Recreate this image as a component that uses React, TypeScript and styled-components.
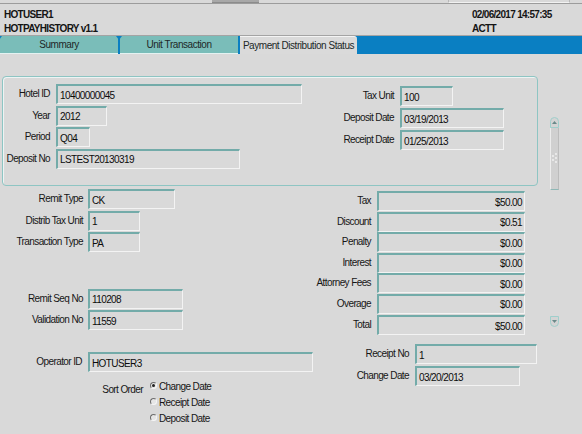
import React from 'react';
import styled, { createGlobalStyle } from 'styled-components';

const GlobalStyle = createGlobalStyle`
  html, body {
    margin: 0;
    padding: 0;
    background: #d9d9d9;
  }
  body {
    font-family: "Liberation Sans", Arial, sans-serif;
    font-size: 10px;
    letter-spacing: -0.6px;
    color: #161616;
  }
`;

const Page = styled.div`
  width: 582px;
  height: 434px;
  overflow: hidden;
  background: #d9d9d9;
`;

const TopStrip = styled.div`
  display: flex;
  height: 3px;
  border-bottom: 1px solid #9c9c9c;
`;

const StripButton = styled.div`
  margin-left: 212px;
  width: 47px;
  background: #a8a8a8;
  border-bottom: 1px solid #8c8c8c;
  box-sizing: border-box;
`;

const StripBox = styled.div`
  margin-left: 189px;
  width: 122px;
  box-sizing: border-box;
  border: 1px solid #b8b8b8;
  border-top: none;
  border-bottom-color: #f2f2f2;
`;

const Header = styled.div`
  display: flex;
  justify-content: space-between;
  height: 32px;
  padding: 4px 0 0 4px;
  box-sizing: border-box;
  border-bottom: 1px solid #a4a4a4;
  font-weight: bold;
  font-size: 10px;
  letter-spacing: -0.7px;
  color: #141414;
`;

const HeaderColumn = styled.div<{ $width?: number }>`
  display: flex;
  flex-direction: column;
  width: ${(p) => (p.$width ? `${p.$width}px` : 'auto')};
`;

const HeaderLine = styled.div`
  height: 14px;
  line-height: 14px;
  white-space: nowrap;
`;

const TabBar = styled.div`
  display: flex;
  gap: 2px;
  height: 18px;
  background: #0a7fc2;
`;

const Tab = styled.div<{ $width: number; $active?: boolean }>`
  position: relative;
  width: ${(p) => p.$width}px;
  box-sizing: border-box;
  display: flex;
  align-items: center;
  justify-content: center;
  font-size: 10px;
  letter-spacing: -0.45px;
  color: #202828;
  background: ${(p) => (p.$active ? '#dadada' : '#7abdb9')};
  border-bottom: ${(p) => (p.$active ? 'none' : '1px solid #e4f2f1')};
  border-top: ${(p) => (p.$active ? '1px solid #f4f4f4' : 'none')};
  border-top-right-radius: ${(p) => (p.$active ? '3px' : '0')};
  white-space: nowrap;

  &::before {
    content: '';
    position: absolute;
    left: -4px;
    top: 0;
    border-left: 3px solid transparent;
    border-right: 3px solid transparent;
    border-top: 4px solid #0a7fc2;
    display: ${(p) => (p.$active ? 'none' : 'block')};
  }
`;

const Main = styled.div`
  display: flex;
`;

const FormColumn = styled.div`
  width: 540px;
  padding-top: 22px;
`;

const GroupBox = styled.div`
  margin-left: 2px;
  width: 536px;
  height: 110px;
  box-sizing: border-box;
  border: 1px solid #8ec5c3;
  border-radius: 4px;
  box-shadow: inset 1px 1px 0 #eef4f4;
  display: grid;
  grid-template-columns: 308px 1fr;
`;

const Stack = styled.div<{ $top: number; $gap: number }>`
  display: flex;
  flex-direction: column;
  gap: ${(p) => p.$gap}px;
  padding-top: ${(p) => p.$top}px;
`;

const Row = styled.div<{ $label: number; $gap?: number; $push?: number }>`
  display: grid;
  grid-template-columns: ${(p) => p.$label}px auto;
  column-gap: ${(p) => p.$gap ?? 6}px;
  align-items: center;
  height: 20px;
  margin-top: ${(p) => p.$push ?? 0}px;
`;

const Label = styled.span`
  text-align: right;
  white-space: nowrap;
  color: #161616;
  line-height: 12px;
`;

const Field = styled.div<{ $width: number; $right?: boolean }>`
  width: ${(p) => p.$width}px;
  height: 20px;
  box-sizing: border-box;
  border-style: solid;
  border-width: 2px 1px 1px 2px;
  border-color: #73aba9 #f3f3f3 #f3f3f3 #73aba9;
  background: #d9d9d9;
  display: flex;
  align-items: center;
  justify-content: ${(p) => (p.$right ? 'flex-end' : 'flex-start')};
  padding: 1px 2px 0 2px;
  color: #0c0c0c;
  white-space: nowrap;
`;

const Lower = styled.div`
  display: grid;
  grid-template-columns: 300px 1fr;
  height: 149px;
`;

const Bottom = styled.div`
  display: grid;
  grid-template-columns: 330px 1fr;
  margin-top: 9px;
`;

const SortRow = styled.div`
  display: grid;
  grid-template-columns: 143px auto;
  column-gap: 7px;
  margin-top: 7px;
`;

const SortLabel = styled.span`
  text-align: right;
  padding-top: 5px;
  color: #161616;
`;

const RadioGroup = styled.div`
  display: flex;
  flex-direction: column;
`;

const RadioOption = styled.label`
  display: flex;
  align-items: flex-start;
  gap: 2px;
  height: 16px;
  line-height: 16px;
  color: #161616;
`;

const RadioDot = styled.span<{ $checked?: boolean }>`
  position: relative;
  width: 7px;
  height: 7px;
  margin-top: 3px;
  box-sizing: border-box;
  border-radius: 50%;
  border: 1px solid;
  border-color: #6c6c6c #f6f6f6 #f6f6f6 #6c6c6c;
  background: #e6e6e6;

  &::after {
    content: '';
    position: absolute;
    left: 1px;
    top: 1px;
    width: 3px;
    height: 3px;
    border-radius: 50%;
    background: #222;
    display: ${(p) => (p.$checked ? 'block' : 'none')};
  }
`;

const ScrollColumn = styled.div`
  margin-left: 10px;
  margin-top: 63px;
  width: 9px;
  display: flex;
  flex-direction: column;
`;

const ScrollButton = styled.div<{ $down?: boolean }>`
  height: 11px;
  box-sizing: border-box;
  border: 1px solid #9fcfcc;
  border-radius: ${(p) => (p.$down ? '0 0 5px 5px' : '5px 5px 0 0')};
  background: #d4d4d4;
  display: flex;
  align-items: center;
  justify-content: center;
`;

const ScrollThumb = styled.div`
  height: 62px;
  box-sizing: border-box;
  background: #d0d0d0;
  border-left: 1px solid #ececec;
  border-right: 1px solid #bcbcbc;
  border-bottom: 1px solid #8fb8b6;
  display: flex;
  align-items: center;
  justify-content: center;
`;

const ScrollTrack = styled.div`
  height: 126px;
`;

const Arrow = ({ down }: { down?: boolean }) => (
  <svg width="5" height="3" viewBox="0 0 5 3">
    <path d={down ? 'M0 0 H5 L2.5 3 Z' : 'M0 3 H5 L2.5 0 Z'} fill="#6a8a8a" />
  </svg>
);

const Grip = () => (
  <svg width="6" height="12" viewBox="0 0 6 12">
    {[
      [4, 1],
      [1, 3],
      [4, 5],
      [1, 7],
      [4, 9],
    ].map(([cx, cy], i) => (
      <circle key={i} cx={cx} cy={cy} r="0.9" fill="#f4f4f4" />
    ))}
  </svg>
);

const amounts: [string, string][] = [
  ['Tax', '$50.00'],
  ['Discount', '$0.51'],
  ['Penalty', '$0.00'],
  ['Interest', '$0.00'],
  ['Attorney Fees', '$0.00'],
  ['Overage', '$0.00'],
];

export default function App() {
  return (
    <Page>
      <GlobalStyle />
      <TopStrip>
        <StripButton />
        <StripBox />
      </TopStrip>
      <Header>
        <HeaderColumn>
          <HeaderLine>HOTUSER1</HeaderLine>
          <HeaderLine>HOTPAYHISTORY v1.1</HeaderLine>
        </HeaderColumn>
        <HeaderColumn $width={110}>
          <HeaderLine>02/06/2017 14:57:35</HeaderLine>
          <HeaderLine>ACTT</HeaderLine>
        </HeaderColumn>
      </Header>
      <TabBar>
        <Tab $width={118}>Summary</Tab>
        <Tab $width={118}>Unit Transaction</Tab>
        <Tab $width={117} $active>
          Payment Distribution Status
        </Tab>
      </TabBar>
      <Main>
        <FormColumn>
          <GroupBox>
            <Stack $top={7} $gap={1.5}>
              <Row $label={47}>
                <Label>Hotel ID</Label>
                <Field $width={246}>10400000045</Field>
              </Row>
              <Row $label={47}>
                <Label>Year</Label>
                <Field $width={51}>2012</Field>
              </Row>
              <Row $label={47}>
                <Label>Period</Label>
                <Field $width={34}>Q04</Field>
              </Row>
              <Row $label={47}>
                <Label>Deposit No</Label>
                <Field $width={184}>LSTEST20130319</Field>
              </Row>
            </Stack>
            <Stack $top={9} $gap={2}>
              <Row $label={83}>
                <Label>Tax Unit</Label>
                <Field $width={53}>100</Field>
              </Row>
              <Row $label={83}>
                <Label>Deposit Date</Label>
                <Field $width={104}>03/19/2013</Field>
              </Row>
              <Row $label={83}>
                <Label>Receipt Date</Label>
                <Field $width={104}>01/25/2013</Field>
              </Row>
            </Stack>
          </GroupBox>
          <Lower>
            <Stack $top={3} $gap={1.5}>
              <Row $label={83} $gap={5}>
                <Label>Remit Type</Label>
                <Field $width={87}>CK</Field>
              </Row>
              <Row $label={83} $gap={5}>
                <Label>Distrib Tax Unit</Label>
                <Field $width={52}>1</Field>
              </Row>
              <Row $label={83} $gap={5}>
                <Label>Transaction Type</Label>
                <Field $width={52}>PA</Field>
              </Row>
              <Row $label={83} $gap={5} $push={35}>
                <Label>Remit Seq No</Label>
                <Field $width={95}>110208</Field>
              </Row>
              <Row $label={83} $gap={5}>
                <Label>Validation No</Label>
                <Field $width={95}>11559</Field>
              </Row>
            </Stack>
            <Stack $top={5} $gap={0.5}>
              {amounts.map(([label, value]) => (
                <Row key={label} $label={71}>
                  <Label>{label}</Label>
                  <Field $width={148} $right>
                    {value}
                  </Field>
                </Row>
              ))}
              <Row $label={71} $push={1}>
                <Label>Total</Label>
                <Field $width={148} $right>
                  $50.00
                </Field>
              </Row>
            </Stack>
          </Lower>
        </FormColumn>
        <ScrollColumn>
          <ScrollButton>
            <Arrow />
          </ScrollButton>
          <ScrollThumb>
            <Grip />
          </ScrollThumb>
          <ScrollTrack />
          <ScrollButton $down>
            <Arrow down />
          </ScrollButton>
        </ScrollColumn>
      </Main>
      <Bottom>
        <Stack $top={8} $gap={0}>
          <Row $label={82}>
            <Label>Operator ID</Label>
            <Field $width={225}>HOTUSER3</Field>
          </Row>
          <SortRow>
            <SortLabel>Sort Order</SortLabel>
            <RadioGroup>
              <RadioOption>
                <RadioDot $checked />
                Change Date
              </RadioOption>
              <RadioOption>
                <RadioDot />
                Receipt Date
              </RadioOption>
              <RadioOption>
                <RadioDot />
                Deposit Date
              </RadioOption>
            </RadioGroup>
          </SortRow>
        </Stack>
        <Stack $top={0} $gap={2}>
          <Row $label={79}>
            <Label>Receipt No</Label>
            <Field $width={122}>1</Field>
          </Row>
          <Row $label={79}>
            <Label>Change Date</Label>
            <Field $width={105}>03/20/2013</Field>
          </Row>
        </Stack>
      </Bottom>
    </Page>
  );
}
